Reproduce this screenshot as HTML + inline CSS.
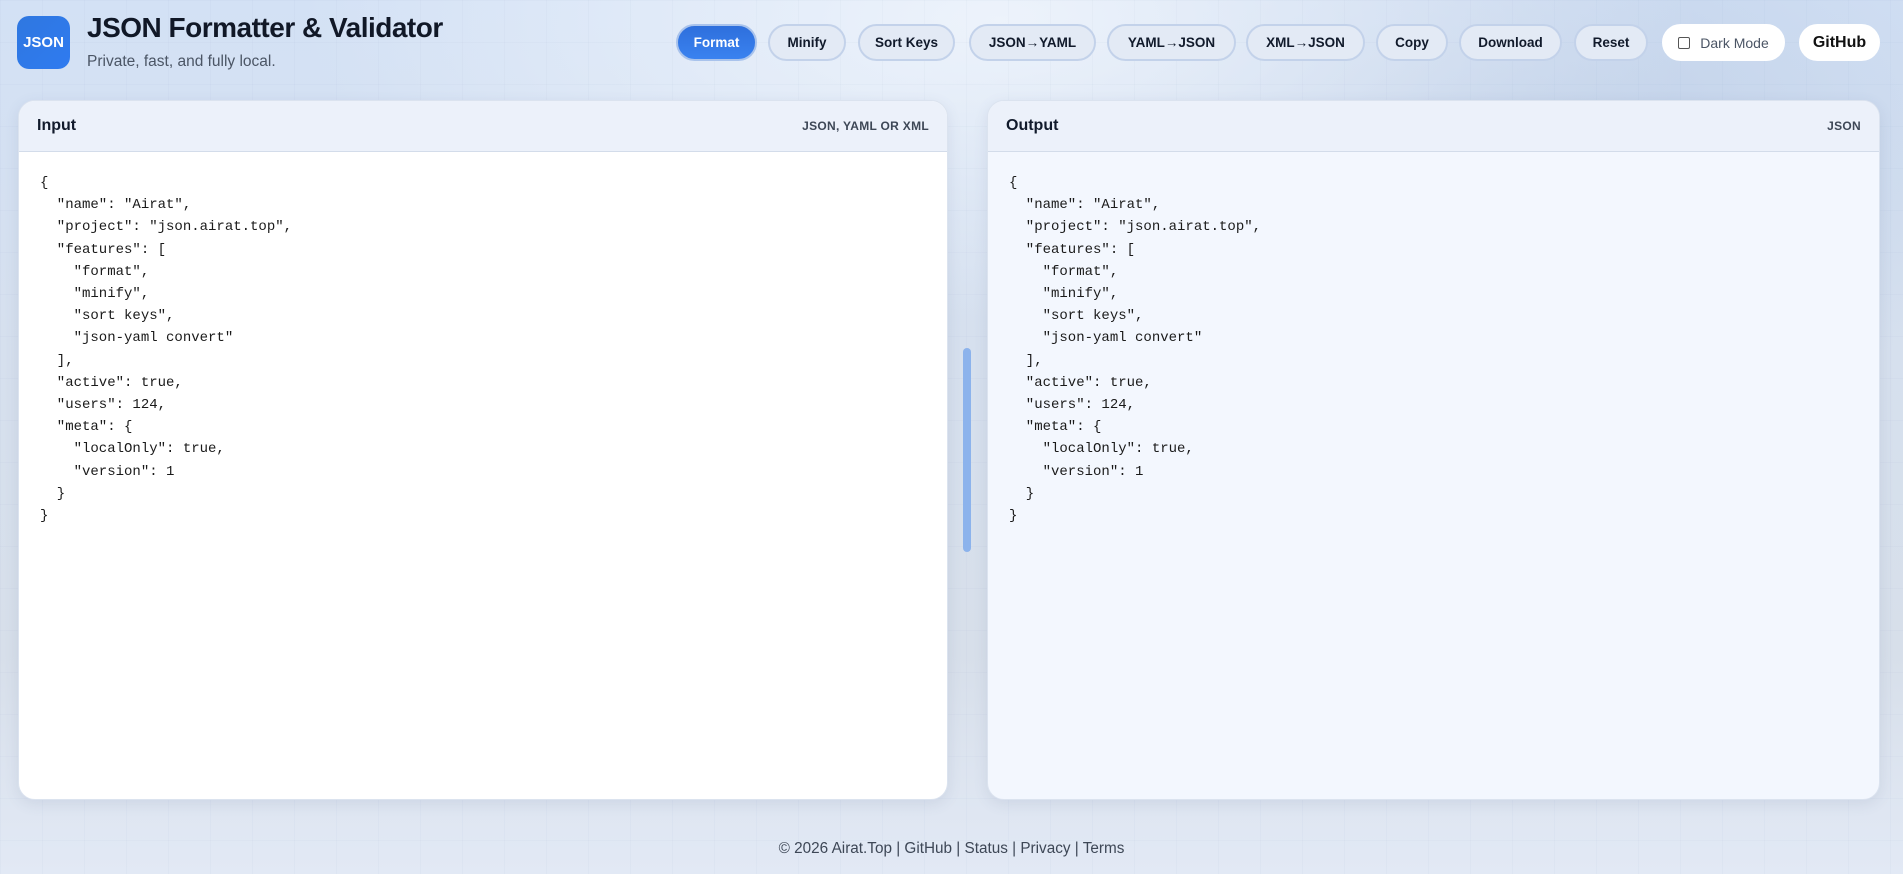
<!DOCTYPE html>
<html><head><meta charset="utf-8"><style>
*{box-sizing:border-box;margin:0;padding:0}
html,body{width:1903px;height:874px;overflow:hidden}
body{font-family:"Liberation Sans",sans-serif;color:#111a2b;position:relative;
background:
linear-gradient(rgba(120,140,180,.045) 1px,transparent 1px) 0 0/42px 42px,
linear-gradient(90deg,rgba(120,140,180,.045) 1px,transparent 1px) 0 0/42px 42px,
radial-gradient(ellipse 700px 300px at 1000px 20px,rgba(240,245,252,.9),transparent),
radial-gradient(ellipse 600px 300px at 1500px 120px,rgba(180,198,225,.6),transparent),
linear-gradient(180deg,#d3e1f5 0%,#d6e0ee 40%,#d7dfea 75%,#e2e9f5 100%);}
.logo{position:absolute;left:17px;top:16px;width:53px;height:53px;border-radius:12px;background:linear-gradient(135deg,#2f77e0,#2f7bf0);color:#fff;font-weight:bold;font-size:15px;display:flex;align-items:center;justify-content:center}
h1{position:absolute;left:87px;top:12px;font-size:28px;font-weight:bold;color:#111827;letter-spacing:-.5px}
.sub{position:absolute;left:87px;top:53px;font-size:15.5px;color:#4b5565}
.btn{position:absolute;top:24px;height:37px;border-radius:19px;border:2px solid #c3d2ea;background:#e3eaf5;font-weight:bold;font-size:13.5px;display:flex;align-items:center;justify-content:center;color:#111a2b}
.btn.pri{background:linear-gradient(180deg,#2e6fdc,#3a82f0);color:#fff;border-color:#a9c3ec}
.btn.w{background:#fff;border-color:#fff;font-weight:normal;color:#4b5565;font-size:14px}
.panel{position:absolute;top:100px;height:700px;border-radius:17px;overflow:hidden;box-shadow:0 4px 14px rgba(80,100,140,.12);border:1px solid #dbe3ef}
.hd{height:51px;background:#ecf1fa;border-bottom:1px solid #d3dcea;display:flex;align-items:center;justify-content:space-between;padding:0 18px}
.hd b{font-size:16px;color:#111a2b}
.hd span{font-size:12px;font-weight:bold;color:#3d4756;letter-spacing:.3px}
pre{font-family:"Liberation Mono",monospace;font-size:14px;line-height:22.2px;color:#1a1a1a;padding:20px 21px}
.foot{position:absolute;top:840px;width:100%;text-align:center;font-size:15.3px;color:#3d4756}
.sb{position:absolute;left:963px;top:348px;width:8px;height:204px;border-radius:4px;background:#8cb3ec}
</style></head><body>
<div class="logo">JSON</div>
<h1>JSON Formatter &amp; Validator</h1>
<div class="sub">Private, fast, and fully local.</div>
<div class="btn pri" style="left:676px;width:81px">Format</div>
<div class="btn" style="left:768px;width:78px">Minify</div>
<div class="btn" style="left:858px;width:97px">Sort Keys</div>
<div class="btn" style="left:969px;width:127px">JSON→YAML</div>
<div class="btn" style="left:1107px;width:129px">YAML→JSON</div>
<div class="btn" style="left:1246px;width:119px">XML→JSON</div>
<div class="btn" style="left:1376px;width:72px">Copy</div>
<div class="btn" style="left:1459px;width:103px">Download</div>
<div class="btn" style="left:1574px;width:74px">Reset</div>
<div class="btn w" style="left:1662px;width:123px"><span style="display:inline-block;width:12px;height:12px;border:1.5px solid #555;border-radius:2px;margin-right:10px"></span>Dark Mode</div>
<div class="btn w" style="left:1799px;width:81px;font-weight:bold;color:#111;font-size:16px">GitHub</div>

<div class="panel" style="left:18px;width:930px;background:#fff">
<div class="hd"><b>Input</b><span>JSON, YAML OR XML</span></div>
<pre>{
  "name": "Airat",
  "project": "json.airat.top",
  "features": [
    "format",
    "minify",
    "sort keys",
    "json-yaml convert"
  ],
  "active": true,
  "users": 124,
  "meta": {
    "localOnly": true,
    "version": 1
  }
}</pre></div>
<div class="sb"></div>
<div class="panel" style="left:987px;width:893px;background:#f3f7fe">
<div class="hd"><b>Output</b><span>JSON</span></div>
<pre>{
  "name": "Airat",
  "project": "json.airat.top",
  "features": [
    "format",
    "minify",
    "sort keys",
    "json-yaml convert"
  ],
  "active": true,
  "users": 124,
  "meta": {
    "localOnly": true,
    "version": 1
  }
}</pre></div>
<div class="foot">© 2026 Airat.Top | GitHub | Status | Privacy | Terms</div>
</body></html>
